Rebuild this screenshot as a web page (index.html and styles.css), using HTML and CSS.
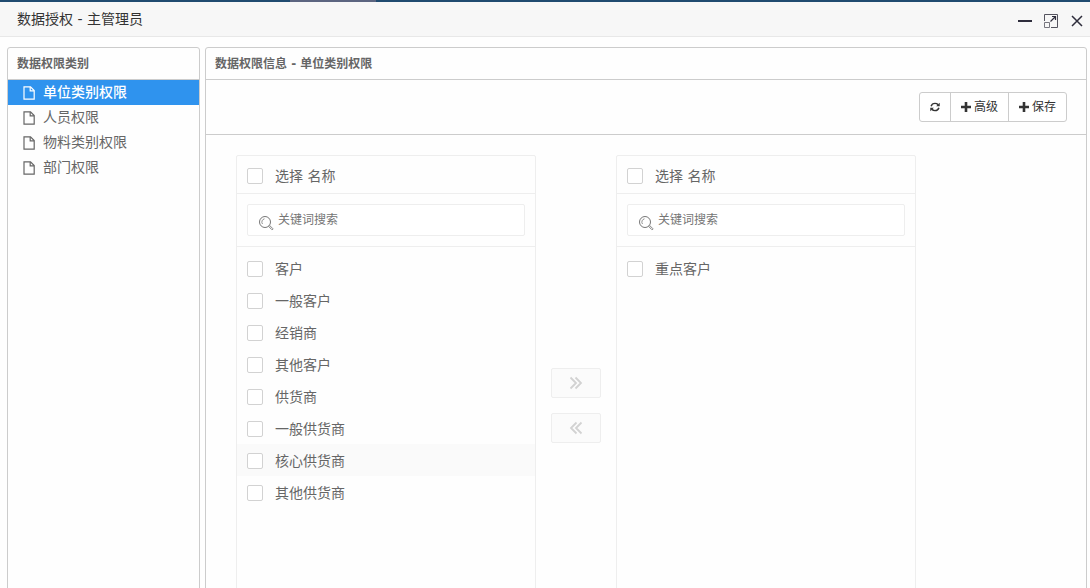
FILE: index.html
```html
<!DOCTYPE html>
<html lang="zh-CN">
<head>
<meta charset="utf-8">
<title>数据授权 - 主管理员</title>
<link rel="stylesheet" href="styles.css">
</head>
<body>
<svg class="defs" aria-hidden="true">
  <symbol id="file" viewBox="0 0 12 14"><path d="M1 .8h6.500L11.200 4.500v8.700H1z" fill="none" stroke="currentColor" stroke-width="1.200"/><path d="M7.200 1v3.800H11" fill="none" stroke="currentColor" stroke-width="1.200"/></symbol>
  <symbol id="plus" viewBox="0 0 10 10"><path d="M3.700 0h2.600v3.700H10v2.600H6.300V10H3.700V6.300H0V3.700h3.700z" fill="currentColor"/></symbol>
  <symbol id="lens" viewBox="0 0 16 16"><circle cx="7" cy="7" r="5.500" fill="none" stroke="currentColor"/><path d="M6.500 3.800A3.300 3.300 0 0 0 4.500 9" fill="none" stroke="currentColor" stroke-width=".8"/><path d="M10.800 11.600l1-1 3.100 3.100q.1 1-1 1z" fill="none" stroke="currentColor" stroke-width=".9"/></symbol>
</svg>
<div class="backdrop"><span class="backdrop-tab"></span></div>
<div class="dialog">
  <header class="titlebar">
    <h1 class="title">数据授权 - 主管理员</h1>
    <div class="window-actions">
      <button class="window-button" type="button" aria-label="最小化"><svg width="14" height="14"><path d="M0 7h14" stroke="#2e2d3c" stroke-width="2"/></svg></button>
      <button class="window-button" type="button" aria-label="最大化"><svg width="14" height="14" fill="none" stroke="#2e2d3c"><path d="M.5 7V.5h13v13H7" stroke="#55545f"/><path d="M8 2.500h3.500V6M11.500 2.500L6.500 7.500" stroke-width="1.200"/><path d="M.5 8.500h5v5h-5z" stroke="#77767f"/></svg></button>
      <button class="window-button" type="button" aria-label="关闭"><svg width="14" height="14"><path d="M2 2l10 10M12 2L2 12" stroke="#2e2d3c" stroke-width="1.500"/></svg></button>
    </div>
  </header>
  <main class="content">
    <nav class="panel">
      <h2 class="panel-title">数据权限类别</h2>
      <ul class="tree">
        <li><a class="tree-item tree-item-active" href="#"><svg class="file-icon"><use href="#file"/></svg>单位类别权限</a></li>
        <li><a class="tree-item" href="#"><svg class="file-icon"><use href="#file"/></svg>人员权限</a></li>
        <li><a class="tree-item" href="#"><svg class="file-icon"><use href="#file"/></svg>物料类别权限</a></li>
        <li><a class="tree-item" href="#"><svg class="file-icon"><use href="#file"/></svg>部门权限</a></li>
      </ul>
    </nav>
    <section class="panel">
      <h2 class="panel-title">数据权限信息 - 单位类别权限</h2>
      <div class="toolbar">
        <div class="button-group">
          <button class="tool-button" type="button" aria-label="刷新"><svg width="10" height="10" viewBox="0 0 11 10"><path d="M1.200 4.200C1.800 2.200 3.400 1 5.500 1c1.400 0 2.500.5 3.400 1.400M9.800 5.800C9.200 7.800 7.600 9 5.500 9 4.100 9 3 8.500 2.100 7.600" fill="none" stroke="currentColor" stroke-width="1.600"/><path d="M10.700.3v3.900H6.800zM.3 9.700V5.800h3.900z" fill="currentColor"/></svg></button>
          <button class="tool-button" type="button"><svg class="plus-icon"><use href="#plus"/></svg>高级</button>
          <button class="tool-button" type="button"><svg class="plus-icon"><use href="#plus"/></svg>保存</button>
        </div>
      </div>
      <div class="transfer">
        <div class="transfer-box">
          <div class="transfer-header"><label class="option"><input class="check" type="checkbox">选择 名称</label></div>
          <div class="search-row"><label class="search"><svg class="lens-icon"><use href="#lens"/></svg><input class="search-input" type="text" placeholder="关键词搜索" aria-label="关键词搜索"></label></div>
          <ul class="transfer-list">
            <li><label class="option"><input class="check" type="checkbox">客户</label></li>
            <li><label class="option"><input class="check" type="checkbox">一般客户</label></li>
            <li><label class="option"><input class="check" type="checkbox">经销商</label></li>
            <li><label class="option"><input class="check" type="checkbox">其他客户</label></li>
            <li><label class="option"><input class="check" type="checkbox">供货商</label></li>
            <li><label class="option"><input class="check" type="checkbox">一般供货商</label></li>
            <li><label class="option option-hover"><input class="check" type="checkbox">核心供货商</label></li>
            <li><label class="option"><input class="check" type="checkbox">其他供货商</label></li>
          </ul>
        </div>
        <div class="transfer-actions">
          <button class="move-button" type="button" disabled aria-label="移到右侧"><svg width="14" height="14" fill="none" stroke="currentColor" stroke-width="1.800"><path d="M1.500 1.500L7 7l-5.500 5.500M6.500 1.500L12 7l-5.500 5.500"/></svg></button>
          <button class="move-button" type="button" disabled aria-label="移到左侧"><svg width="14" height="14" fill="none" stroke="currentColor" stroke-width="1.800"><path d="M7.500 1.500L2 7l5.500 5.500M12.500 1.500L7 7l5.500 5.500"/></svg></button>
        </div>
        <div class="transfer-box">
          <div class="transfer-header"><label class="option"><input class="check" type="checkbox">选择 名称</label></div>
          <div class="search-row"><label class="search"><svg class="lens-icon"><use href="#lens"/></svg><input class="search-input" type="text" placeholder="关键词搜索" aria-label="关键词搜索"></label></div>
          <ul class="transfer-list">
            <li><label class="option"><input class="check" type="checkbox">重点客户</label></li>
          </ul>
        </div>
      </div>
    </section>
  </main>
</div>
</body>
</html>
```
FILE: styles.css
```css
* { box-sizing: border-box; }
body {
  margin: 0;
  height: 100vh;
  overflow: hidden;
  background: #fefefe;
  color: #666;
  font: 14px/20px "DejaVu Sans", "Noto Sans CJK SC", sans-serif;
}
h1, h2, ul { margin: 0; padding: 0; }
ul { list-style: none; }
button, input { font: inherit; margin: 0; }
svg { display: block; flex: none; }
.defs { display: none; }

.backdrop { height: 2px; padding-left: 290px; background: #204b70; }
.backdrop-tab { display: block; width: 86px; height: 2px; background: #5c6580; }

.dialog { height: calc(100vh - 2px); overflow: hidden; }
.titlebar {
  display: flex;
  align-items: center;
  justify-content: space-between;
  height: 35px;
  padding: 0 6px 0 17px;
  border-bottom: 1px solid #e8e8e8;
  background: #f7f7f7;
}
.title { color: #333; font-size: 14px; font-weight: 400; }
.window-actions { display: flex; gap: 12px; padding-top: 4px; }
.window-button { padding: 0; border: 0; background: none; }

.content {
  display: grid;
  grid-template-columns: 193px 1fr;
  gap: 5px;
  padding: 10px 3px 10px 7px;
}
.panel { border: 1px solid #ccc; border-radius: 3px; }
.panel-title {
  height: 32px;
  padding-left: 9px;
  border-bottom: 1px solid #ccc;
  font-size: 12px;
  line-height: 32px;
  font-weight: 700;
}

.tree-item {
  display: flex;
  align-items: center;
  gap: 8px;
  height: 25px;
  padding: 0 0 2px 15px;
  color: #666;
  text-decoration: none;
}
.tree-item-active { background: #2f93ee; color: #fff; font-weight: 500; }
.file-icon { width: 12px; height: 14px; margin-top: 3px; }

.toolbar {
  display: flex;
  justify-content: flex-end;
  padding: 12px 19px;
  border-bottom: 1px solid #ccc;
}
.button-group { display: flex; border: 1px solid #ccc; border-radius: 3px; background: #fff; }
.tool-button {
  display: flex;
  align-items: center;
  gap: 3px;
  height: 28px;
  padding: 0 10px;
  border: 0;
  background: none;
  color: #333;
  font-size: 12px;
}
.tool-button + .tool-button { border-left: 1px solid #ccc; }
.plus-icon { width: 10px; height: 10px; }

.transfer { display: flex; align-items: center; gap: 15px; padding: 20px 30px; }
.transfer-box {
  width: 300px;
  min-height: 500px;
  border: 1px solid #eee;
  border-radius: 2px;
}
.transfer-header { height: 38px; padding-top: 3px; border-bottom: 1px solid #eee; }
.option {
  display: flex;
  align-items: center;
  gap: 12px;
  height: 32px;
  padding: 2px 10px 0;
}
.option-hover { background: #fafafa; }
.check {
  appearance: none;
  width: 16px;
  height: 16px;
  border: 1px solid #d2d2d2;
  border-radius: 2px;
  background: #fff;
}
.search-row { padding: 10px; border-bottom: 1px solid #eee; }
.search {
  display: flex;
  align-items: center;
  gap: 4px;
  height: 32px;
  padding-left: 10px;
  border: 1px solid #eee;
  border-radius: 2px;
  background: #fff;
}
.lens-icon { width: 16px; height: 16px; margin-top: 6px; color: #777; }
.search-input {
  flex: 1;
  min-width: 0;
  height: 30px;
  padding: 0;
  border: 0;
  outline: 0;
  background: none;
  font-size: 12px;
}
.search-input::placeholder { color: #757575; }
.transfer-list { padding: 5px 0; }
.transfer-actions { display: grid; gap: 15px; }
.move-button {
  display: grid;
  place-items: center;
  width: 50px;
  height: 30px;
  padding: 0;
  border: 1px solid #eee;
  border-radius: 2px;
  background: #fbfbfb;
  color: #d2d2d2;
}
```
